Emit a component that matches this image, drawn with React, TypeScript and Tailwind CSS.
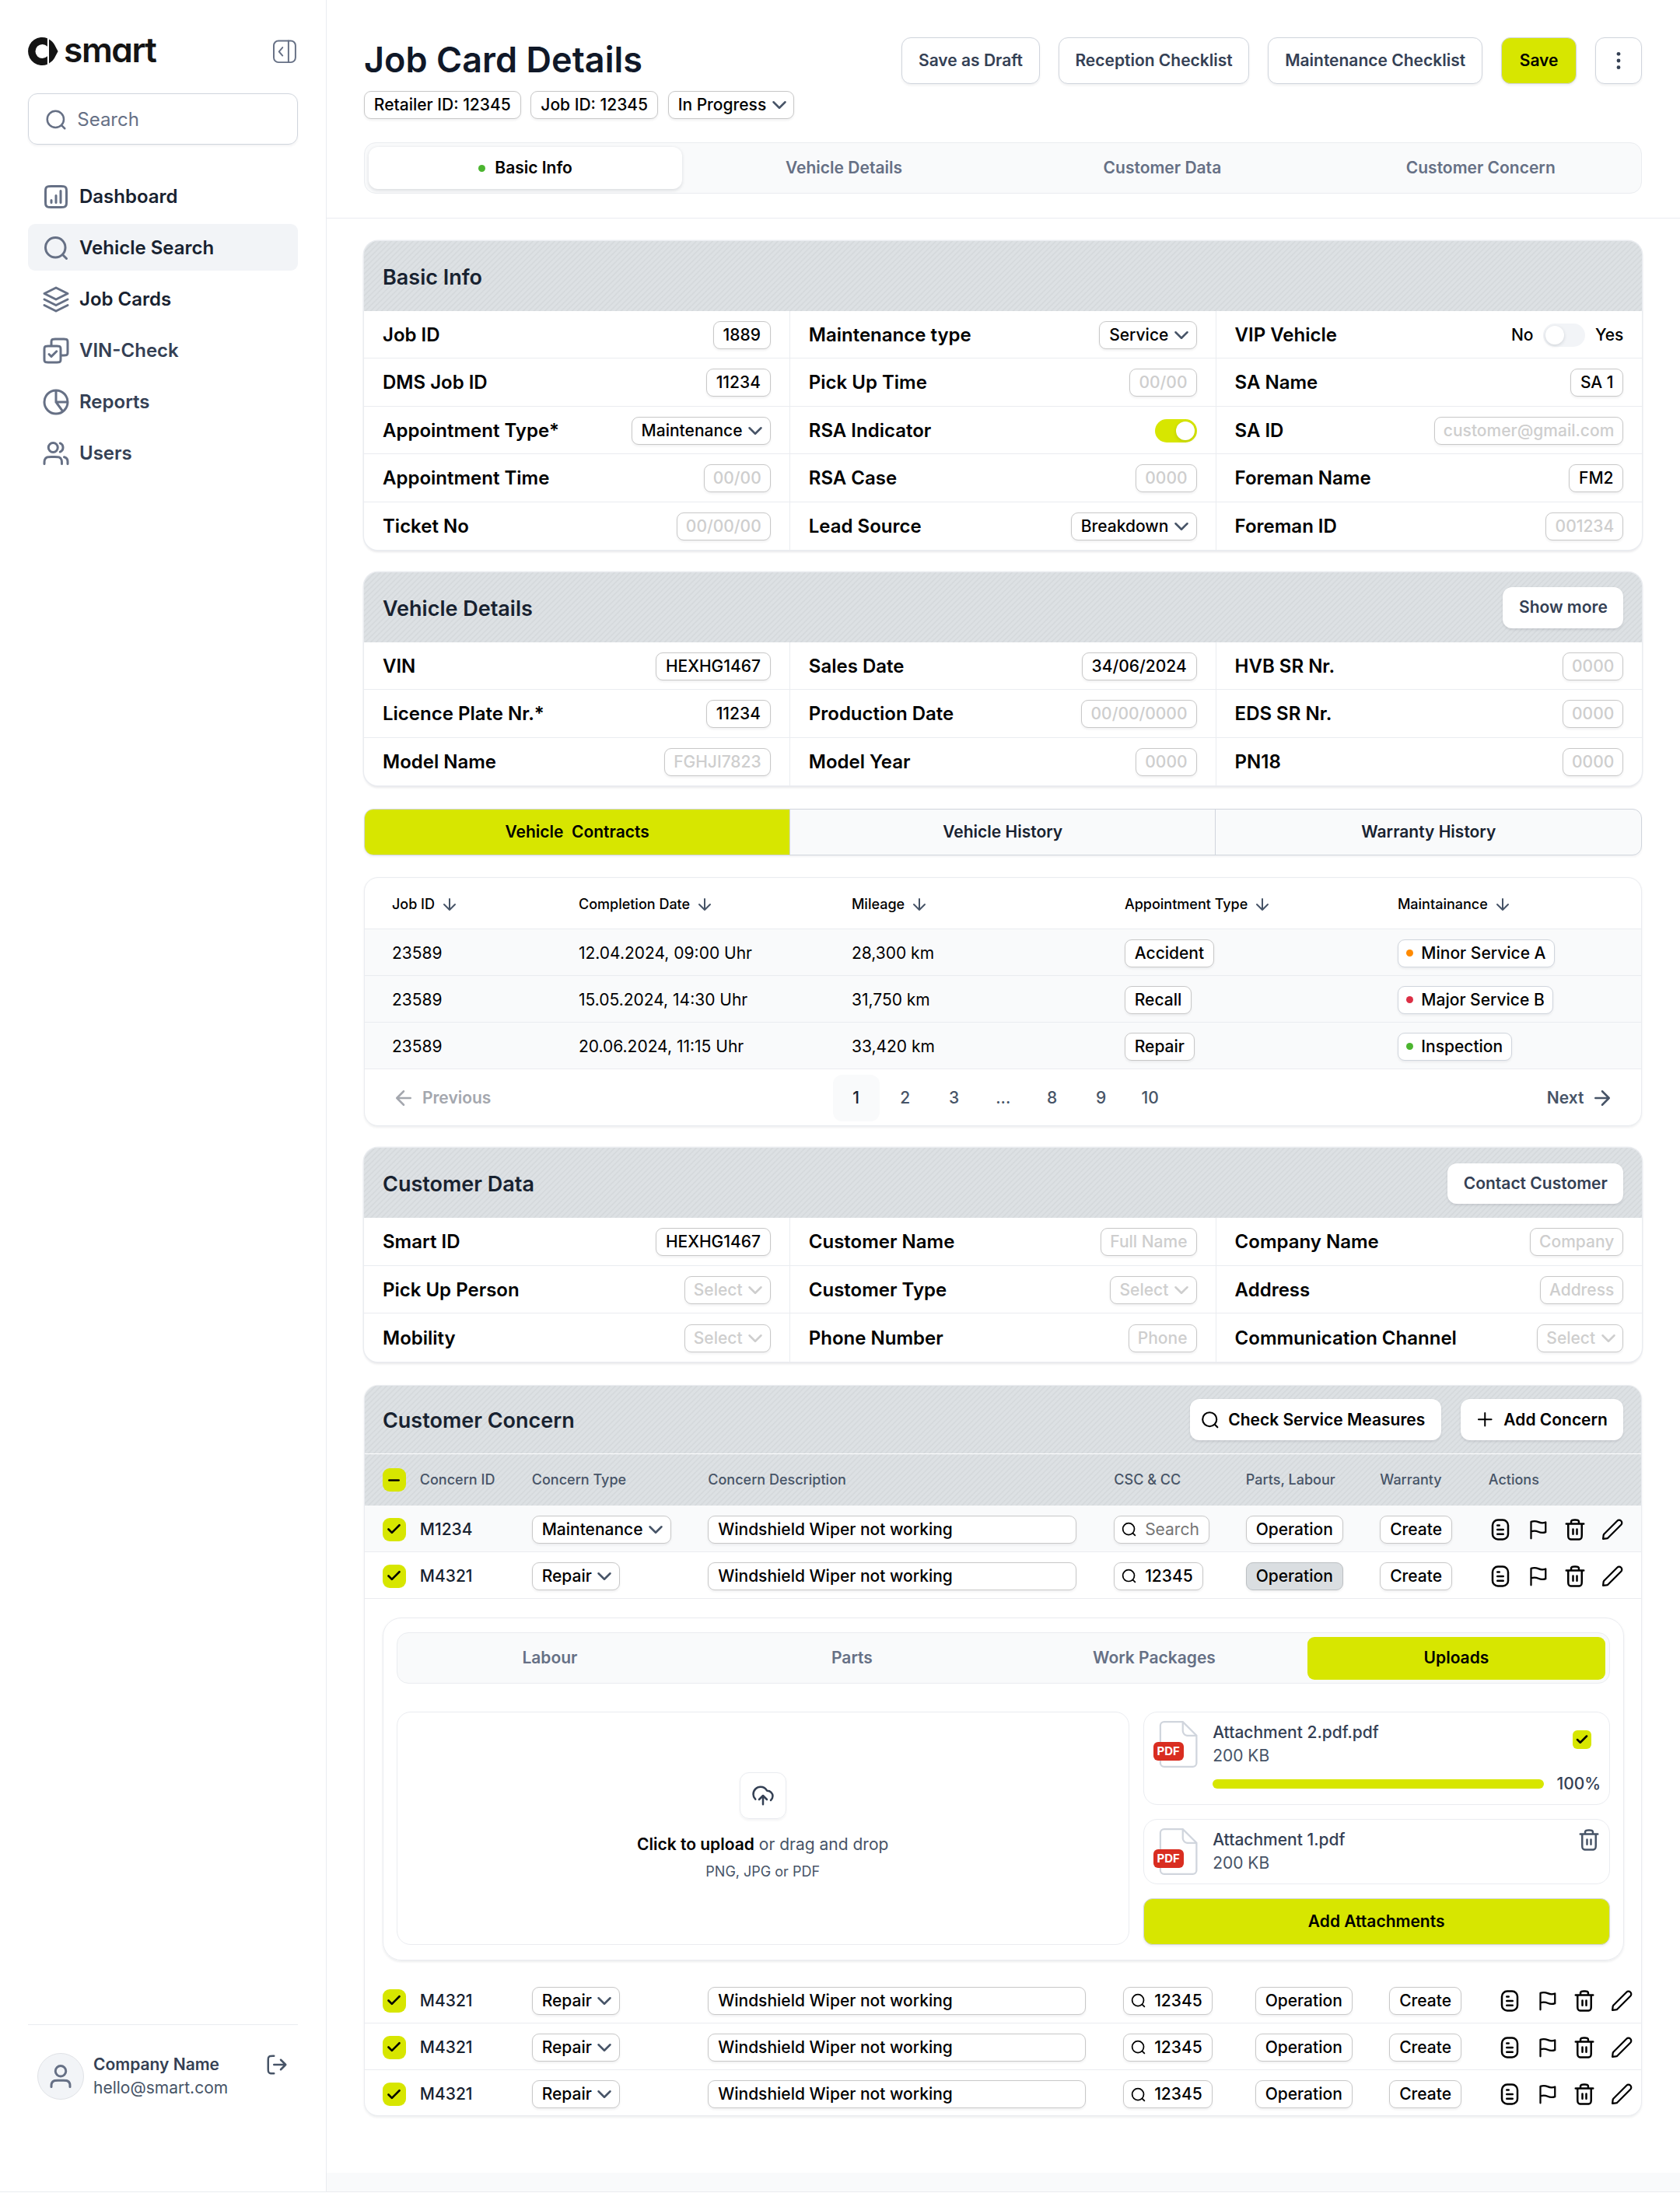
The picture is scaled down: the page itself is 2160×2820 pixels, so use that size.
import React from "react";

type IconProps = { d: string; size: number; className?: string; stroke?: number };

function Icon({ d, size, className = "", stroke = 2 }: IconProps) {
  return (
    <svg
      width={size}
      height={size}
      viewBox="0 0 24 24"
      fill="none"
      stroke="currentColor"
      strokeWidth={stroke}
      strokeLinecap="round"
      strokeLinejoin="round"
      className={`shrink-0 ${className}`}
    >
      <path d={d} />
    </svg>
  );
}

const P = {
  search: "M21 21L17.5 17.5M20 11.5A8.5 8.5 0 1 1 3 11.5a8.5 8.5 0 0 1 17 0Z",
  dashboard:
    "M8 15V17M12 11V17M16 7V17M7.8 21H16.2C17.88 21 18.72 21 19.362 20.673C19.927 20.385 20.385 19.927 20.673 19.362C21 18.72 21 17.88 21 16.2V7.8C21 6.12 21 5.28 20.673 4.638C20.385 4.074 19.927 3.615 19.362 3.327C18.72 3 17.88 3 16.2 3H7.8C6.12 3 5.28 3 4.638 3.327C4.074 3.615 3.615 4.074 3.327 4.638C3 5.28 3 6.12 3 7.8V16.2C3 17.88 3 18.72 3.327 19.362C3.615 19.927 4.074 20.385 4.638 20.673C5.28 21 6.12 21 7.8 21Z",
  layers: "M2 12L12 17L22 12M2 17L12 22L22 17M2 7L12 2L22 7L12 12Z",
  checks:
    "M6 15L8 17L12.5 12.5M8 8V5.2C8 4.08 8 3.52 8.218 3.092C8.41 2.716 8.716 2.41 9.092 2.218C9.52 2 10.08 2 11.2 2H18.8C19.92 2 20.48 2 20.908 2.218C21.284 2.41 21.59 2.716 21.782 3.092C22 3.52 22 4.08 22 5.2V12.8C22 13.92 22 14.48 21.782 14.908C21.59 15.284 21.284 15.59 20.908 15.782C20.48 16 19.92 16 18.8 16H16M5.2 22H12.8C13.92 22 14.48 22 14.908 21.782C15.284 21.59 15.59 21.284 15.782 20.908C16 20.48 16 19.92 16 18.8V11.2C16 10.08 16 9.52 15.782 9.092C15.59 8.716 15.284 8.41 14.908 8.218C14.48 8 13.92 8 12.8 8H5.2C4.08 8 3.52 8 3.092 8.218C2.716 8.41 2.41 8.716 2.218 9.092C2 9.52 2 10.08 2 11.2V18.8C2 19.92 2 20.48 2.218 20.908C2.41 21.284 2.716 21.59 3.092 21.782C3.52 22 4.08 22 5.2 22Z",
  pie: "M12 2A10 10 0 1 0 22 12A10 10 0 0 0 12 2ZM12 2V12M22 12H12M17.9 20.1L12 12",
  users:
    "M22 21V19C22 17.1362 20.7252 15.5701 19 15.126M15.5 3.29076C16.9659 3.88415 18 5.32131 18 7C18 8.67869 16.9659 10.1159 15.5 10.7092M17 21C17 19.1362 17 18.2044 16.6955 17.4693C16.2895 16.4892 15.5108 15.7105 14.5307 15.3045C13.7956 15 12.8638 15 11 15H8C6.13623 15 5.20435 15 4.46927 15.3045C3.48915 15.7105 2.71046 16.4892 2.30448 17.4693C2 18.2044 2 19.1362 2 21M13.5 7C13.5 9.20914 11.7091 11 9.5 11C7.29086 11 5.5 9.20914 5.5 7C5.5 4.79086 7.29086 3 9.5 3C11.7091 3 13.5 4.79086 13.5 7Z",
  user: "M20 21C20 19.6044 20 18.9067 19.8278 18.3389C19.44 17.0605 18.4395 16.06 17.1611 15.6722C16.5933 15.5 15.8956 15.5 14.5 15.5H9.5C8.10444 15.5 7.40665 15.5 6.83886 15.6722C5.56045 16.06 4.56004 17.0605 4.17224 18.3389C4 18.9067 4 19.6044 4 21M16.5 7.5C16.5 9.98528 14.4853 12 12 12C9.51472 12 7.5 9.98528 7.5 7.5C7.5 5.01472 9.51472 3 12 3C14.4853 3 16.5 5.01472 16.5 7.5Z",
  logout:
    "M16 17L21 12M21 12L16 7M21 12H9M9 3H7.8C6.12 3 5.28 3 4.638 3.327C4.074 3.615 3.615 4.074 3.327 4.638C3 5.28 3 6.12 3 7.8V16.2C3 17.88 3 18.72 3.327 19.362C3.615 19.927 4.074 20.385 4.638 20.673C5.28 21 6.12 21 7.8 21H9",
  chevron: "M6 9L12 15L18 9",
  arrowDown: "M12 5V19M12 19L19 12M12 19L5 12",
  arrowLeft: "M19 12H5M5 12L12 19M5 12L12 5",
  arrowRight: "M5 12H19M19 12L12 5M19 12L12 19",
  plus: "M12 5V19M5 12H19",
  check: "M20 6L9 17L4 12",
  minus: "M5 12H19",
  doc: "M9 7.5H11M9 12H15M9 16.5H15M9.5 2H14.5A5.5 5.5 0 0 1 20 7.5V16.5A5.5 5.5 0 0 1 14.5 22H9.5A5.5 5.5 0 0 1 4 16.5V7.5A5.5 5.5 0 0 1 9.5 2Z",
  flag: "M5.2 21V3.9C7.7 2.9 10.2 3 12.7 4.1C15.2 5.3 17.7 5.4 20.2 4.4V14.5C17.7 15.5 15.2 15.4 12.7 14.2C10.2 13.1 7.7 13 5.2 14",
  trash:
    "M16 6V5.2C16 4.0799 16 3.51984 15.782 3.09202C15.5903 2.71569 15.2843 2.40973 14.908 2.21799C14.4802 2 13.9201 2 12.8 2H11.2C10.0799 2 9.51984 2 9.09202 2.21799C8.71569 2.40973 8.40973 2.71569 8.21799 3.09202C8 3.51984 8 4.0799 8 5.2V6M10 11.5V16.5M14 11.5V16.5M3 6H21M19 6V17.2C19 18.8802 19 19.7202 18.673 20.362C18.3854 20.9265 17.9265 21.3854 17.362 21.673C16.7202 22 15.8802 22 14.2 22H9.8C8.11984 22 7.27976 22 6.63803 21.673C6.07354 21.3854 5.6146 20.9265 5.32698 20.362C5 19.7202 5 18.8802 5 17.2V6",
  pencil:
    "M2.87604 18.1156C2.92198 17.7021 2.94496 17.4954 3.00751 17.3022C3.06301 17.1307 3.14143 16.9676 3.24064 16.8171C3.35246 16.6475 3.49955 16.5005 3.79373 16.2063L17 3C18.1046 1.89543 19.8954 1.89543 21 3C22.1046 4.10457 22.1046 5.89543 21 7L7.79373 20.2063C7.49955 20.5005 7.35246 20.6475 7.18289 20.7594C7.03245 20.8586 6.86929 20.937 6.69785 20.9925C6.5046 21.055 6.29786 21.078 5.88437 21.124L2.5 21.5L2.87604 18.1156Z",
  cloud:
    "M8 16L12 12M12 12L16 16M12 12V21M20 16.7428C21.2215 15.734 22 14.2079 22 12.5C22 9.46243 19.5376 7 16.5 7C16.2815 7 16.0771 6.886 15.9661 6.69774C14.6621 4.48484 12.2544 3 9.5 3C5.35786 3 2 6.35786 2 10.5C2 12.5661 2.83545 14.4371 4.18695 15.7935",
};

const STRIPES =
  "bg-[#dde1e4] bg-[repeating-linear-gradient(135deg,#d5d9dc_0px,#d5d9dc_0.4px,#dde1e4_1.1px,#dde1e4_2.6px,#d5d9dc_3.3px)]";

/* ---------- small pieces ---------- */

type ChipProps = {
  children: React.ReactNode;
  muted?: boolean;
  select?: boolean;
  className?: string;
};

function Chip({ children, muted, select, className = "border-[#c8c8c8] bg-white" }: ChipProps) {
  return (
    <div
      className={`flex h-6 shrink-0 items-center whitespace-nowrap rounded-md border text-sm font-medium leading-5 shadow-[0_1px_2px_rgba(16,24,40,0.06)] ${
        select ? "pr-[2.5px]" : muted ? "pr-[7.4px]" : "pr-[7.9px]"
      } ${muted ? "pl-[7.4px] text-[#cecece]" : "pl-[7.9px] text-black"} ${className}`}
    >
      {children}
      {select && (
        <Icon d={P.chevron} size={20} className={`ml-px ${muted ? "text-[#cecece]" : "text-[#475467]"}`} />
      )}
    </div>
  );
}

function Checkbox({ minus }: { minus?: boolean }) {
  return (
    <div className="flex size-5 shrink-0 items-center justify-center rounded-md bg-[#d7e600] text-black">
      <Icon d={minus ? P.minus : P.check} size={14} stroke={3} />
    </div>
  );
}

function Button({ children, className = "" }: { children: React.ReactNode; className?: string }) {
  return (
    <div
      className={`flex h-10 items-center justify-center whitespace-nowrap rounded-lg border border-[#d0d5dd] bg-white text-sm font-semibold text-[#344054] shadow-[0_1px_2px_rgba(16,24,40,0.06)] ${className}`}
    >
      {children}
    </div>
  );
}

function HeaderButton({ children, className = "text-[#344054]" }: { children: React.ReactNode; className?: string }) {
  return (
    <div
      className={`flex h-[35px] items-center whitespace-nowrap rounded-lg bg-white px-[13.7px] text-sm font-semibold shadow-[0_1px_2px_rgba(16,24,40,0.1)] ${className}`}
    >
      {children}
    </div>
  );
}

function Toggle({ on }: { on?: boolean }) {
  return (
    <div className={`flex h-5 w-9 items-center rounded-full p-0.5 ${on ? "justify-end bg-[#d7e600]" : "bg-[#f2f4f7]"}`}>
      <div className="size-4 rounded-full bg-white shadow-[0_1px_3px_rgba(16,24,40,0.15)]" />
    </div>
  );
}

/* ---------- sidebar ---------- */

const NAV = [
  { label: "Dashboard", icon: P.dashboard, dark: true },
  { label: "Vehicle Search", icon: P.search, dark: true, active: true },
  { label: "Job Cards", icon: P.layers, dark: true },
  { label: "VIN-Check", icon: P.checks },
  { label: "Reports", icon: P.pie },
  { label: "Users", icon: P.users },
];

function Sidebar() {
  return (
    <aside className="flex w-[280px] shrink-0 flex-col border-r border-[#eaecf0] px-6 pt-8">
      <div className="flex h-6 items-center justify-between">
        <div className="flex h-6 items-center text-[#141414]">
          <svg width="26" height="24" viewBox="0 0 26 24" fill="currentColor">
            <path d="M16.6 0.9A12 12 0 1 0 16.6 23.1V16.2A6 6 0 1 1 16.6 7.8Z" />
            <path d="M18 1.7C20.2 2.9 21.8 4.6 22.9 6.6L25.7 12L22.9 17.4C21.8 19.4 20.2 21.1 18 22.3Z" />
          </svg>
          <span className="mb-[2.5px] ml-[4.7px] text-[29.5px] font-semibold leading-6 tracking-[-0.033em] [font-feature-settings:'cv11']">
            smart
          </span>
        </div>
        <svg
          width="24"
          height="24"
          viewBox="0 0 24 24"
          fill="none"
          stroke="#667085"
          strokeWidth="1.3"
          strokeLinecap="round"
          strokeLinejoin="round"
          className="mr-px"
        >
          <rect x="4" y="3" width="18.6" height="18.4" rx="4" />
          <path d="M16.6 3V21.4M11.5 8.7L8.5 12.2L11.5 15.7" />
        </svg>
      </div>
      <div className="mt-6 flex h-11 w-[231px] items-center gap-2 rounded-lg border border-[#d0d5dd] px-[13.5px] pt-px text-base text-[#667085] shadow-[0_1px_2px_rgba(16,24,40,0.05)]">
        <Icon d={P.search} size={20} />
        Search
      </div>
      <nav className="mt-6 flex flex-col gap-1">
        {NAV.map((n) => (
          <div
            key={n.label}
            className={`flex h-10 items-center gap-2 rounded-md px-3 pt-px text-base font-semibold ${n.active ? "bg-[#f2f4f7]" : ""} ${
              n.dark ? "text-[#182230]" : "text-[#344054]"
            }`}
          >
            <Icon d={n.icon} size={24} className="text-[#667085]" />
            {n.label}
          </div>
        ))}
      </nav>
      <div className="mb-[78.7px] mt-auto flex border-t border-[#eaecf0] pl-2 pr-2 pt-6">
        <div className="flex size-10 items-center justify-center rounded-full border border-[#e0e2e6] bg-[#f2f4f7] text-[#667085]">
          <Icon d={P.user} size={24} />
        </div>
        <div className="ml-2 flex-1 text-sm leading-5">
          <div className="font-semibold text-[#344054]">Company Name</div>
          <div className="text-[#475467]">hello@smart.com</div>
        </div>
        <Icon d={P.logout} size={20} className="text-[#475467]" />
      </div>
    </aside>
  );
}

/* ---------- page header ---------- */

function PageHeader() {
  return (
    <header className="h-[187px] border-b border-[#eaecf0] pl-8 pr-[32.4px] pt-8">
      <div className="flex h-[38px] items-start justify-between">
        <h1 className="text-[30px] font-semibold leading-[38px] tracking-[0.02px] text-[#101828]">Job Card Details</h1>
        <div className="flex gap-4">
          <Button className="px-[13.8px]">Save as Draft</Button>
          <Button className="px-[13.8px]">Reception Checklist</Button>
          <Button className="px-[13.8px]">Maintenance Checklist</Button>
          <Button className="bg-[#d7e600]! px-[15.3px] text-black!">Save</Button>
          <Button className="w-10">
            <svg width="20" height="20" viewBox="0 0 20 20" fill="#344054">
              <circle cx="10" cy="4.2" r="1.6" />
              <circle cx="10" cy="10" r="1.6" />
              <circle cx="10" cy="15.8" r="1.6" />
            </svg>
          </Button>
        </div>
      </div>
      <div className="mt-2 flex gap-[8.6px]">
        <Chip>Retailer ID: 12345</Chip>
        <Chip>Job ID: 12345</Chip>
        <Chip select>In Progress</Chip>
      </div>
      <div className="mt-5 grid h-11 grid-cols-4 gap-1 rounded-[10px] border border-[#eaecf0] bg-[#f9fafb] p-[3.3px] text-sm font-semibold text-[#667085]">
        <div className="flex items-center justify-center gap-2 rounded-lg bg-white text-black shadow-[0_1px_3px_rgba(16,24,40,0.13)]">
          <span className="size-1.5 rounded-full bg-[#4bb52f]" />
          Basic Info
        </div>
        <div className="flex items-center justify-center">Vehicle Details</div>
        <div className="flex items-center justify-center">Customer Data</div>
        <div className="flex items-center justify-center">Customer Concern</div>
      </div>
    </header>
  );
}

/* ---------- field cards ---------- */

type Field = { label: string; value?: string; muted?: boolean; select?: boolean; control?: React.ReactNode };

function FieldCard({
  title,
  action,
  columns,
  className = "",
}: {
  title: string;
  action?: React.ReactNode;
  columns: Field[][];
  className?: string;
}) {
  return (
    <section
      className={`overflow-hidden rounded-xl bg-white shadow-[0_0_0_1px_#eaecf0,0_2px_2px_rgba(16,24,40,0.1)] ${className}`}
    >
      <div className={`flex h-[60px] items-center justify-between px-4 pt-[0.7px] ${STRIPES}`}>
        <h2 className="pt-[1.7px] text-lg font-semibold text-[#182230]">{title}</h2>
        {action}
      </div>
      <div className="grid grid-cols-3">
        {columns.map((col, i) => (
          <div key={i} className={i < 2 ? "border-r border-[#eaecf0]" : ""}>
            {col.map((f, j) => (
              <div
                key={f.label}
                className={`flex h-[41px] items-center justify-between px-4 pt-px ${j < col.length - 1 ? "border-b border-[#eaecf0]" : ""}`}
              >
                <span className="text-base font-semibold text-black">{f.label}</span>
                {f.control ?? (
                  <Chip muted={f.muted} select={f.select}>
                    {f.value}
                  </Chip>
                )}
              </div>
            ))}
          </div>
        ))}
      </div>
    </section>
  );
}

const BASIC: Field[][] = [
  [
    { label: "Job ID", value: "1889" },
    { label: "DMS Job ID", value: "11234" },
    { label: "Appointment Type*", value: "Maintenance", select: true },
    { label: "Appointment Time", value: "00/00", muted: true },
    { label: "Ticket No", value: "00/00/00", muted: true },
  ],
  [
    { label: "Maintenance type", value: "Service", select: true },
    { label: "Pick Up Time", value: "00/00", muted: true },
    { label: "RSA Indicator", control: <Toggle on /> },
    { label: "RSA Case", value: "0000", muted: true },
    { label: "Lead Source", value: "Breakdown", select: true },
  ],
  [
    {
      label: "VIP Vehicle",
      control: (
        <div className="flex items-center text-sm font-medium text-black">
          No
          <div className="mx-[8.5px]">
            <Toggle />
          </div>
          Yes
        </div>
      ),
    },
    { label: "SA Name", value: "SA 1" },
    { label: "SA ID", value: "customer@gmail.com", muted: true },
    { label: "Foreman Name", value: "FM2" },
    { label: "Foreman ID", value: "001234", muted: true },
  ],
];

const VEHICLE: Field[][] = [
  [
    { label: "VIN", value: "HEXHG1467" },
    { label: "Licence Plate Nr.*", value: "11234" },
    { label: "Model Name", value: "FGHJI7823", muted: true },
  ],
  [
    { label: "Sales Date", value: "34/06/2024" },
    { label: "Production Date", value: "00/00/0000", muted: true },
    { label: "Model Year", value: "0000", muted: true },
  ],
  [
    { label: "HVB SR Nr.", value: "0000", muted: true },
    { label: "EDS SR Nr.", value: "0000", muted: true },
    { label: "PN18", value: "0000", muted: true },
  ],
];

const CUSTOMER: Field[][] = [
  [
    { label: "Smart ID", value: "HEXHG1467" },
    { label: "Pick Up Person", value: "Select", muted: true, select: true },
    { label: "Mobility", value: "Select", muted: true, select: true },
  ],
  [
    { label: "Customer Name", value: "Full Name", muted: true },
    { label: "Customer Type", value: "Select", muted: true, select: true },
    { label: "Phone Number", value: "Phone", muted: true },
  ],
  [
    { label: "Company Name", value: "Company", muted: true },
    { label: "Address", value: "Address", muted: true },
    { label: "Communication Channel", value: "Select", muted: true, select: true },
  ],
];

/* ---------- contracts table ---------- */

const CONTRACTS = [
  { date: "12.04.2024, 09:00 Uhr", km: "28,300 km", type: "Accident", service: "Minor Service A", dot: "bg-[#ff8a00]" },
  { date: "15.05.2024, 14:30 Uhr", km: "31,750 km", type: "Recall", service: "Major Service B", dot: "bg-[#dc2f45]" },
  { date: "20.06.2024, 11:15 Uhr", km: "33,420 km", type: "Repair", service: "Inspection", dot: "bg-[#4bb52f]" },
];

const CONTRACT_GRID = "grid grid-cols-[160px_234px_234px_234px_1fr] items-center *:pl-[23.3px]";

function Contracts() {
  return (
    <>
      <div className="mt-[19.7px] grid h-10 grid-cols-3 overflow-hidden rounded-lg border border-[#d0d5dd] bg-[#f9fafb] text-sm font-semibold text-[#182230] shadow-[0_1px_2px_rgba(16,24,40,0.05)]">
        <div className="flex items-center justify-center whitespace-pre border-r border-[#d0d5dd] bg-[#d7e600] text-black">
          {"Vehicle  Contracts"}
        </div>
        <div className="flex items-center justify-center border-r border-[#d0d5dd]">Vehicle History</div>
        <div className="flex items-center justify-center">Warranty History</div>
      </div>
      <div className="mt-[19px] flex h-[213px] flex-col overflow-hidden rounded-xl border border-[#eaecf0] bg-white shadow-[0_1px_2px_rgba(16,24,40,0.07)]">
        <div className={`h-11 border-b border-[#eaecf0] pt-px text-xs font-medium text-black ${CONTRACT_GRID}`}>
          {["Job ID", "Completion Date", "Mileage", "Appointment Type", "Maintainance"].map((h) => (
            <div key={h} className="flex items-center gap-[4.6px]">
              {h}
              <Icon d={P.arrowDown} size={16} className="text-[#475467]" />
            </div>
          ))}
        </div>
        {CONTRACTS.map((c) => (
          <div key={c.date} className={`h-10 border-b border-[#eaecf0] bg-[#f9fafb] pt-px text-sm text-black ${CONTRACT_GRID}`}>
            <div>23589</div>
            <div>{c.date}</div>
            <div>{c.km}</div>
            <div className="flex">
              <Chip>{c.type}</Chip>
            </div>
            <div className="flex">
              <Chip className="border-[#d0d5dd] bg-white px-[7px]!">
                <span className={`mr-[6.6px] size-1.5 rounded-full ${c.dot}`} />
                {c.service}
              </Chip>
            </div>
          </div>
        ))}
        <div className="flex flex-1 items-center justify-between px-[23.3px] pt-px text-sm font-semibold text-[#475467]">
          <div className="flex w-[150px] items-center gap-1.5 text-[#a4a7ae]">
            <Icon d={P.arrowLeft} size={20} />
            Previous
          </div>
          <div className="flex gap-0.5 font-medium">
            {["1", "2", "3", "...", "8", "9", "10"].map((p) => (
              <div
                key={p}
                className={`flex size-10 items-center justify-center rounded-lg ${p === "1" ? "bg-[#f9fafb] text-[#182230]" : ""}`}
              >
                {p}
              </div>
            ))}
          </div>
          <div className="flex w-[150px] items-center justify-end gap-1.5">
            Next
            <Icon d={P.arrowRight} size={20} />
          </div>
        </div>
      </div>
    </>
  );
}

/* ---------- customer concern ---------- */

const CONCERN_GRID = "grid grid-cols-[128px_151px_348px_113px_115px_93px_1fr] items-center pl-[15.2px]";
const CONCERN_GRID_WIDE = "grid grid-cols-[128px_151px_356px_113px_115px_93px_1fr] items-center pl-[15.2px]";

type Concern = { id: string; type: string; code?: string; tint?: boolean; pressed?: boolean };

function ConcernRow({ row, wide, last }: { row: Concern; wide?: boolean; last?: boolean }) {
  return (
    <div
      className={`h-10 pt-px ${wide ? CONCERN_GRID_WIDE : CONCERN_GRID} ${last ? "" : "border-b border-[#eaecf0]"} ${
        row.tint ? "bg-[#f9fafb]" : ""
      }`}
    >
      <div className="flex items-center gap-3 text-sm font-medium text-[#182230]">
        <Checkbox />
        {row.id}
      </div>
      <div className="flex">
        <Chip select>{row.type}</Chip>
      </div>
      <div className={wide ? "w-[324px]" : "w-[316px]"}>
        <Chip>Windshield Wiper not working</Chip>
      </div>
      <div className="flex">
        <Chip>
          <Icon d={P.search} size={14} className="-ml-[2.5px] mr-[6.5px] text-black" />
          <span className={row.code ? "" : "font-normal text-[#757575]"}>{row.code ?? "Search"}</span>
        </Chip>
      </div>
      <div className="flex">
        <Chip className={row.pressed ? "border-[#bcc0c3] bg-[#dadee1]" : "border-[#c8c8c8] bg-white"}>Operation</Chip>
      </div>
      <div className="flex">
        <Chip>Create</Chip>
      </div>
      <div className="flex gap-3 text-black">
        <Icon d={P.doc} size={20} />
        <Icon d={P.flag} size={20} stroke={1.8} />
        <Icon d={P.trash} size={20} />
        <Icon d={P.pencil} size={20} stroke={1.8} />
      </div>
    </div>
  );
}

function PdfIcon() {
  return (
    <div className="relative size-10 shrink-0">
      <svg width="40" height="40" viewBox="0 0 40 40" fill="none" stroke="#d0d5dd" strokeWidth="1.5">
        <path d="M7.25 4A3.25 3.25 0 0 1 10.5 0.75H26.5L38.25 12.5V36A3.25 3.25 0 0 1 35 39.25H10.5A3.25 3.25 0 0 1 7.25 36Z" />
        <path d="M26.5 0.75V8.5A4 4 0 0 0 30.5 12.5H38.25" />
      </svg>
      <div className="absolute left-px top-[18px] flex h-4 w-[26px] items-center justify-center rounded-sm bg-[#d92d20] text-[10px] font-bold text-white">
        PDF
      </div>
    </div>
  );
}

function UploadPanel() {
  return (
    <div className="mx-[15px] mt-4 h-[293.5px] rounded-2xl border border-[#eaecf0] px-[11.5px] pt-3 shadow-[0_1px_2px_rgba(16,24,40,0.08)]">
      <div className="grid h-11 grid-cols-4 gap-1 rounded-[10px] border border-[#eaecf0] bg-[#f9fafb] p-[3.3px] text-sm font-semibold text-[#667085]">
        <div className="flex items-center justify-center">Labour</div>
        <div className="flex items-center justify-center">Parts</div>
        <div className="flex items-center justify-center">Work Packages</div>
        <div className="flex items-center justify-center rounded-md bg-[#d7e600] text-black">Uploads</div>
      </div>
      <div className="mt-6 flex gap-3">
        <div className="flex h-[200px] flex-1 flex-col items-center justify-center rounded-xl border border-[#eaecf0] pb-[2px]">
          <div className="flex size-10 items-center justify-center rounded-lg border border-[#eaecf0] text-[#344054] shadow-[0_1px_2px_rgba(16,24,40,0.05)]">
            <Icon d={P.cloud} size={20} />
          </div>
          <div className="mt-3 text-sm leading-5 text-[#475467]">
            <span className="font-semibold text-black">Click to upload</span> or drag and drop
          </div>
          <div className="mt-1 text-xs leading-[18px] text-[#475467]">PNG, JPG or PDF</div>
        </div>
        <div className="flex w-[400px] flex-col gap-3">
          <div className="flex h-20 rounded-xl border border-[#eaecf0] p-[7px]">
            <PdfIcon />
            <div className="ml-3 flex-1 text-sm leading-5">
              <div className="flex justify-between">
                <div>
                  <div className="font-medium text-[#344054]">Attachment 2.pdf.pdf</div>
                  <div className="text-[#475467]">200 KB</div>
                </div>
                <div className="mr-2 mt-2 flex size-4 items-center justify-center rounded bg-[#d7e600] text-black">
                  <Icon d={P.check} size={12} stroke={3.4} />
                </div>
              </div>
              <div className="mt-1 flex items-center gap-[11px]">
                <div className="h-2 flex-1 rounded bg-[#d7e600]" />
                <span className="font-medium text-[#344054]">100%</span>
              </div>
            </div>
          </div>
          <div className="flex h-14 rounded-xl border border-[#eaecf0] p-[7px]">
            <PdfIcon />
            <div className="ml-3 flex-1 text-sm leading-5">
              <div className="font-medium text-[#344054]">Attachment 1.pdf</div>
              <div className="text-[#475467]">200 KB</div>
            </div>
            <Icon d={P.trash} size={20} className="text-[#475467]" />
          </div>
          <Button className="bg-[#d7e600]! text-black!">Add Attachments</Button>
        </div>
      </div>
    </div>
  );
}

function ConcernCard() {
  return (
    <section className="mt-5 h-[627px] overflow-hidden rounded-xl border border-[#eaecf0] bg-white shadow-[0_1px_2px_rgba(16,24,40,0.07)]">
      <div className={`flex h-[59px] items-center justify-between border-b border-white px-[15.3px] ${STRIPES}`}>
        <h2 className="pt-[1.2px] text-lg font-semibold text-[#182230]">Customer Concern</h2>
        <div className="flex gap-[17px]">
          <HeaderButton className="pl-[8px]! text-black">
            <Icon d={P.search} size={17} className="ml-px mr-[7px]" />
            Check Service Measures
          </HeaderButton>
          <HeaderButton className="text-black">
            <Icon d={P.plus} size={19} className="-ml-[2.5px] mr-[6.5px]" stroke={1.7} />
            Add Concern
          </HeaderButton>
        </div>
      </div>
      <div className={`h-11 text-xs font-medium text-[#475467] ${CONCERN_GRID} ${STRIPES}`}>
        <div className="flex items-center gap-3">
          <Checkbox minus />
          Concern ID
        </div>
        <div>Concern Type</div>
        <div>Concern Description</div>
        <div>CSC &amp; CC</div>
        <div>Parts, Labour</div>
        <div>Warranty</div>
        <div>Actions</div>
      </div>
      <ConcernRow row={{ id: "M1234", type: "Maintenance", tint: true }} />
      <ConcernRow row={{ id: "M4321", type: "Repair", code: "12345", pressed: true }} />
      <UploadPanel />
      <div className="mt-[14.5px]">
        {[0, 1, 2].map((i) => (
          <ConcernRow key={i} row={{ id: "M4321", type: "Repair", code: "12345" }} wide last={i === 2} />
        ))}
      </div>
    </section>
  );
}

export default function App() {
  return (
    <div className="h-[1880px] w-[1440px] overflow-hidden bg-white font-['Inter',sans-serif] [zoom:1.5]">
      <div className="flex h-[1879.4px] border-b border-[#eaecf0]">
        <Sidebar />
        <div className="flex flex-1 flex-col">
          <PageHeader />
          <main className="flex-1 pl-8 pr-[32.4px] pt-[19.6px]">
            <FieldCard title="Basic Info" columns={BASIC} />
            <FieldCard
              className="mt-[19px]"
              title="Vehicle Details"
              action={<HeaderButton>Show more</HeaderButton>}
              columns={VEHICLE}
            />
            <Contracts />
            <FieldCard
              className="mt-[19px]"
              title="Customer Data"
              action={<HeaderButton>Contact Customer</HeaderButton>}
              columns={CUSTOMER}
            />
            <ConcernCard />
          </main>
          <footer className="h-4 bg-[#f9fafb]" />
        </div>
      </div>
    </div>
  );
}
